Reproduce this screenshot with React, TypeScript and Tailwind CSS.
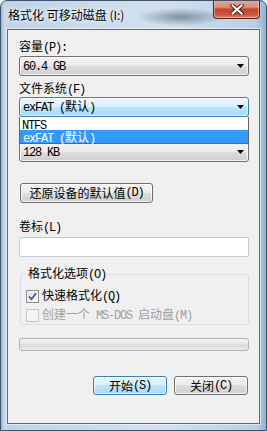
import type { ReactNode } from "react";

// Win7 style control skins
const GRAY_BTN =
  "border border-[#707070] rounded-[3px] bg-[linear-gradient(#f2f2f2_0%,#ebebeb_50%,#dddddd_50%,#cfcfcf_100%)] shadow-[inset_0_0_0_1px_rgba(255,255,255,0.75)]";
const BLUE_BTN =
  "border border-[#3c7fb1] rounded-[3px] bg-[linear-gradient(#eaf6fd_0%,#d9f0fc_50%,#bee6fd_50%,#a7d9f5_100%)] shadow-[inset_0_0_0_1px_rgba(255,255,255,0.6)]";

function M({ children }: { children: ReactNode }) {
  return <span className="font-['Liberation_Mono',monospace] tracking-[-1.2px]">{children}</span>;
}

function Label({ children, className = "" }: { children: ReactNode; className?: string }) {
  return <div className={`h-[12px] leading-[12px] whitespace-nowrap ${className}`}>{children}</div>;
}

function Arrow() {
  return (
    <svg width="7" height="4" viewBox="0 0 7 4">
      <path d="M0 0h7L3.5 4z" fill="#000" />
    </svg>
  );
}

function Combo({
  children,
  focused = false,
  className = "",
}: {
  children: ReactNode;
  focused?: boolean;
  className?: string;
}) {
  return (
    <div
      className={`h-[20px] w-[230px] flex items-center justify-between pl-[3px] pr-[4px] leading-[12px] ${
        focused ? BLUE_BTN : GRAY_BTN
      } ${className}`}
    >
      <span className="whitespace-nowrap">{children}</span>
      <Arrow />
    </div>
  );
}

function CheckBox({ checked, disabled }: { checked?: boolean; disabled?: boolean }) {
  return (
    <div
      className={`w-[13px] h-[13px] shrink-0 border flex items-center justify-center ${
        disabled
          ? "border-[#c4c4c4] bg-[#f4f4f4]"
          : "border-[#8e8f8f] bg-[linear-gradient(135deg,#dcdcdc,#ffffff)] shadow-[inset_0_0_0_1px_#f4f4f4]"
      }`}
    >
      {checked && (
        <svg width="9" height="9" viewBox="0 0 9 9">
          <path d="M1 4.5L3.5 7.2L8 1.2" fill="none" stroke="#3b55a5" strokeWidth="1.8" />
        </svg>
      )}
    </div>
  );
}

export default function App() {
  return (
    <div className="w-[267px] h-[431px] overflow-hidden rounded-t-[7px] border border-[#40536a] font-['Noto_Sans_CJK_SC',sans-serif] text-[12px] text-black bg-[radial-gradient(ellipse_45px_9px_at_180px_16px,rgba(60,80,100,0.55),transparent),linear-gradient(90deg,#95b5d6_0px,#c6d8ea_3px,#bfd3e8_10px,#d3e1ee_60%,#b9cfe4_96%,#92b2d4_100%)]">
      {/* title bar */}
      <div className="h-[28px] flex justify-between">
        <div className="pl-[7px] pt-[7px] leading-[14px] whitespace-nowrap [text-shadow:0_0_6px_#fff,0_0_3px_#fff]">
          格式化 可移动磁盘 (I:)
        </div>
        <div className="mr-[6px] -mt-[1px] w-[47px] h-[19px] rounded-b-[4px] border border-[#5e2016] border-t-0 bg-[linear-gradient(#e9a99a_0%,#d98b78_40%,#c2452c_52%,#c8553a_80%,#d8876d_100%)] shadow-[inset_0_0_0_1px_rgba(255,230,220,0.45)] flex items-center justify-center">
          <svg width="14" height="11" viewBox="0 0 14 11">
            <path d="M2.5 1.5L11.5 9.5M11.5 1.5L2.5 9.5" stroke="#4a1a12" strokeWidth="4" strokeLinecap="square" />
            <path d="M2.5 1.5L11.5 9.5M11.5 1.5L2.5 9.5" stroke="#ffffff" strokeWidth="2.2" strokeLinecap="square" />
          </svg>
        </div>
      </div>

      {/* client area */}
      <div className="ml-[6px] w-[253px] h-[395px] border border-[#56697e] bg-[#f0f0f0] shadow-[0_0_0_1px_rgba(255,255,255,0.55)]">
        <div className="relative flex flex-col pl-[11px] pr-[10px]">
          <Label className="mt-[10px]">
            容量<M>(P):</M>
          </Label>
          <Combo className="mt-[4px]">
            <M>60.4 GB</M>
          </Combo>
          <Label className="mt-[6px]">
            文件系统<M>(F)</M>
          </Label>
          <Combo focused className="mt-[3px]">
            <M>exFAT (</M>默认<M>)</M>
          </Combo>
          {/* allocation unit label sits under the open list */}
          <div className="mt-[6px] h-[12px]" />
          <Combo className="mt-[7px]">
            <M>128 KB</M>
          </Combo>

          {/* open dropdown list of the file system combo */}
          <div className="absolute left-[11px] top-[87px] w-[230px] border border-t-0 border-[#646464] bg-white leading-[13px]">
            <div className="h-[13px] pl-[2px]">
              <M>NTFS</M>
            </div>
            <div className="h-[13px] pl-[3px] bg-[#3399ff] text-white">
              <M>exFAT (</M>默认<M>)</M>
            </div>
          </div>

          <div className={`mt-[21px] ml-[1px] w-[133px] h-[20px] flex items-center justify-center leading-[12px] whitespace-nowrap ${GRAY_BTN}`}>
            还原设备的默认值<M>(D)</M>
          </div>

          <Label className="mt-[17px]">
            卷标<M>(L)</M>
          </Label>
          <div className="mt-[5px] w-[230px] h-[20px] rounded-[2px] border border-[#c8ccd2] bg-white" />

          <fieldset className="mt-[9px] ml-[1px] w-[229px] h-[59px] border border-[#d5dfe5] rounded-[3px] pl-[5px]">
            <legend className="px-[2px] leading-[14px]">
              格式化选项<M>(O)</M>
            </legend>
            <div className="mt-[6px] flex items-center gap-[3px] leading-[14px]">
              <CheckBox checked />
              <span className="whitespace-nowrap">
                快速格式化<M>(Q)</M>
              </span>
            </div>
            <div className="mt-[3px] flex items-center gap-[3px] leading-[14px] text-[#a0a0a0]">
              <CheckBox disabled />
              <span className="whitespace-nowrap">
                创建一个<M> MS-DOS </M>启动盘<M>(M)</M>
              </span>
            </div>
          </fieldset>

          <div className="mt-[13px] w-[230px] h-[13px] rounded-[3px] border border-[#b2b2b2] bg-[linear-gradient(#f6f6f6_0%,#e6e6e6_45%,#d9d9d9_55%,#ececec_100%)]" />

          <div className="mt-[25px] mr-[1px] flex justify-end gap-[7px]">
            <div className={`w-[74px] h-[19px] flex items-center justify-center leading-[12px] ${BLUE_BTN}`}>
              开始<M>(S)</M>
            </div>
            <div className={`w-[74px] h-[19px] flex items-center justify-center leading-[12px] ${GRAY_BTN}`}>
              关闭<M>(C)</M>
            </div>
          </div>
        </div>
      </div>
    </div>
  );
}
